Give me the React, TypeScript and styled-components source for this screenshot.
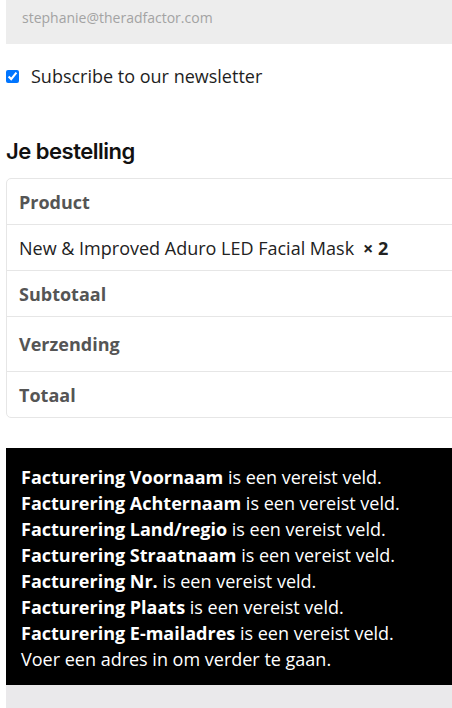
import React from 'react';
import styled, {createGlobalStyle} from 'styled-components';

const GlobalStyle = createGlobalStyle`
  html, body {
    margin: 0;
    padding: 0;
    background: #ffffff;
    overflow: hidden;
  }
  body {
    font-family: 'Open Sans', sans-serif;
    color: #222;
  }
`;

const Page = styled.div`
  width: 500px;
  padding-left: 6px;
  display: flex;
  flex-direction: column;
`;

const EmailField = styled.div`
  height: 44px;
  background: #ededed;
  display: flex;
  align-items: center;
  padding: 0 16px 10px;
  box-sizing: border-box;
  font-size: 14px;
  color: #a3a3a3;
`;

const CheckRow = styled.label`
  display: flex;
  align-items: center;
  gap: 12px;
  margin-top: 20px;
  font-size: 18px;
  color: #1e1e1e;
`;

const Check = styled.input`
  margin: 0;
  width: 13px;
  height: 13px;
`;

const Heading = styled.h3`
  margin: 48px 0 0;
  font-family: Inter, 'Liberation Sans', sans-serif;
  font-size: 22px;
  font-weight: 600;
  letter-spacing: -0.5px;
  color: #111;
  line-height: 30px;
`;

const Table = styled.div`
  margin-top: 12px;
  border: 1px solid #e6e6e6;
  border-radius: 5px;
  display: flex;
  flex-direction: column;
`;

const Row = styled.div<{$tall?: boolean; $last?: boolean}>`
  height: ${({$tall}) => ($tall ? '54px' : '45px')};
  display: flex;
  align-items: center;
  padding-left: 12px;
  font-size: 18px;
  border-bottom: ${({$last}) => ($last ? 'none' : '1px solid #e6e6e6')};
`;

const Label = styled.span`
  font-weight: 700;
  color: #555;
`;

const Item = styled.span`
  color: #222;
`;

const Qty = styled.strong`
  margin-left: 9px;
  font-weight: 700;
`;

const Notice = styled.ul`
  list-style: none;
  margin: 30px 0 0;
  padding: 16px 15px 13px;
  background: #000;
  color: #fff;
  font-size: 18px;
  line-height: 26px;
`;

const Footer = styled.div`
  height: 30px;
  background: #eae9eb;
`;

const errors = [
  'Voornaam',
  'Achternaam',
  'Land/regio',
  'Straatnaam',
  'Nr.',
  'Plaats',
  'E-mailadres',
];

export default function App() {
  return (
    <>
      <GlobalStyle />
      <Page>
        <EmailField>stephanie@theradfactor.com</EmailField>
        <CheckRow>
          <Check type="checkbox" defaultChecked />
          Subscribe to our newsletter
        </CheckRow>
        <Heading>Je bestelling</Heading>
        <Table>
          <Row>
            <Label>Product</Label>
          </Row>
          <Row>
            <Item>New &amp; Improved Aduro LED Facial Mask</Item>
            <Qty>× 2</Qty>
          </Row>
          <Row>
            <Label>Subtotaal</Label>
          </Row>
          <Row $tall>
            <Label>Verzending</Label>
          </Row>
          <Row $last>
            <Label>Totaal</Label>
          </Row>
        </Table>
        <Notice>
          {errors.map((e) => (
            <li key={e}>
              <strong>Facturering {e}</strong> is een vereist veld.
            </li>
          ))}
          <li>Voer een adres in om verder te gaan.</li>
        </Notice>
        <Footer />
      </Page>
    </>
  );
}
